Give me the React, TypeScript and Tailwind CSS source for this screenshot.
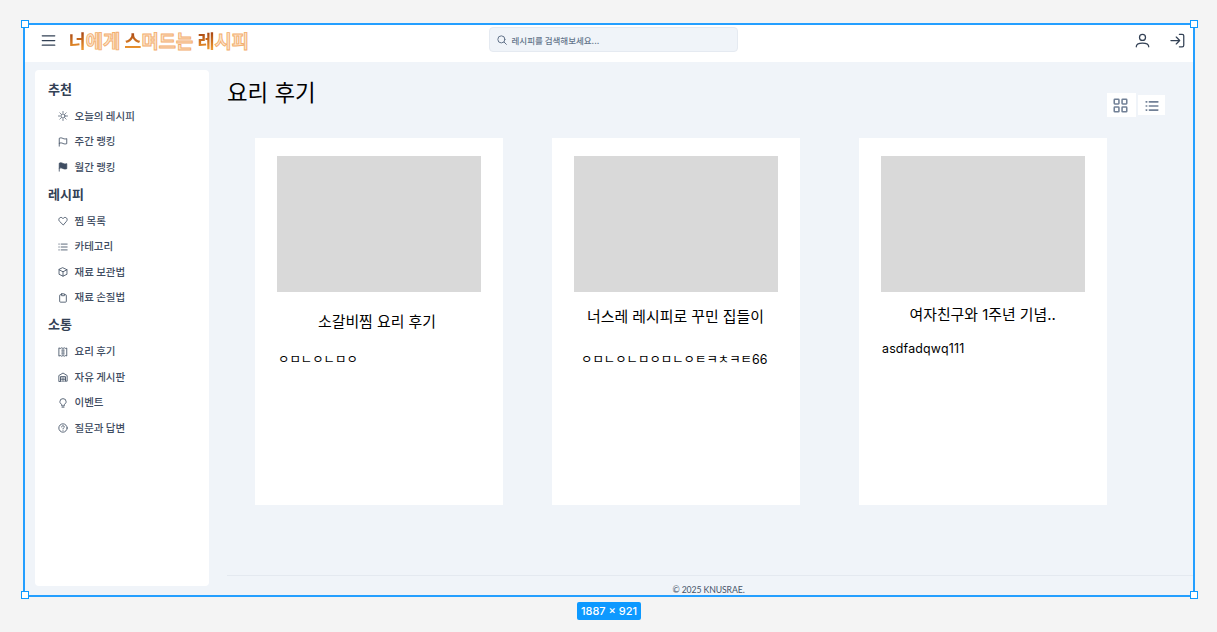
import type { ReactNode } from "react";

const KR = "font-['Inter','Noto_Sans_CJK_KR',sans-serif]";

function Icon({ children, className, w = 1.6 }: { children: ReactNode; className: string; w?: number }) {
  return (
    <svg viewBox="0 0 24 24" fill="none" stroke="currentColor" strokeWidth={w} strokeLinecap="round" strokeLinejoin="round" className={className}>
      {children}
    </svg>
  );
}

const listShape = <path d="M7.5 5H22M7.5 12H22M7.5 19H22M2 5h1M2 12h1M2 19h1" />;

const icons: Record<string, ReactNode> = {
  sun: (
    <>
      <circle cx="12" cy="12" r="5" />
      <path d="M12 1.5v2M12 20.5v2M1.5 12h2M20.5 12h2M4.6 4.6l1.3 1.3M18.1 18.1l1.3 1.3M4.6 19.4l1.3-1.3M18.1 5.9l1.3-1.3" />
    </>
  ),
  flag: <path d="M3 22V3c3-1.500 6-1 9 .5s6 1.500 9 .5v12c-3 1-6 1-9-.5s-6-2-9-.5" />,
  flagFill: <path fill="currentColor" d="M3 22V3c3-1.500 6-1 9 .5s6 1.500 9 .5v12c-3 1-6 1-9-.5s-6-2-9-.5" />,
  heart: <path d="M12 21 3.400 12.500C1.500 10.500 1.500 7 3.400 5c2.200-2.200 5.500-2.100 7.500 0L12 6.200 13.100 5c2-2.100 5.300-2.200 7.500 0 1.900 2 1.900 5.500 0 7.500z" />,
  list: listShape,
  box: <path d="M12 2 21.500 6.500v11L12 22l-9.500-4.500v-11zM2.500 6.500 12 11.500l9.500-5M12 11.500V22" />,
  clipboard: (
    <>
      <path d="M8 4H6a2 2 0 0 0-2 2v14a2 2 0 0 0 2 2h12a2 2 0 0 0 2-2V6a2 2 0 0 0-2-2h-2" />
      <rect x="8" y="2" width="8" height="4.500" rx="1" />
    </>
  ),
  receipt: (
    <>
      <path d="M3 2.500 5.500 3.500 8.800 2 12 3.500 15.200 2l3.300 1.500L21 2.500v19l-2.500-1-3.300 1.500L12 20.500 8.800 22l-3.300-1.500L3 21.500z" />
      <path strokeWidth="1.5" d="M8.500 7.500h7M8.500 12h7M8.500 16.500h7M12 6v12" />
    </>
  ),
  warehouse: (
    <>
      <path d="M2 22V8.500L12 2.500l10 6V22h-4V11H6v11z" />
      <path strokeWidth="1.5" d="M6 14.500h12M6 18h12M6 22h12M12 14.500V22" />
    </>
  ),
  bulb: <path d="M9 18v-2.500C6.500 14 4.500 12 4.500 9a7.500 7.500 0 0 1 15 0c0 3-2 5-4.500 6.500V18zM9.500 22h5" />,
  question: (
    <>
      <circle cx="12" cy="12" r="10" />
      <path d="M8.800 9.500c0-2 1.500-3 3.200-3s3.200 1.100 3.200 2.900c0 2.300-3.200 2.300-3.200 4.600M12 17.400v.2" />
    </>
  ),
};

const sections = [
  { title: "추천", items: [["sun", "오늘의 레시피"], ["flag", "주간 랭킹"], ["flagFill", "월간 랭킹"]] },
  { title: "레시피", items: [["heart", "찜 목록"], ["list", "카테고리"], ["box", "재료 보관법"], ["clipboard", "재료 손질법"]] },
  { title: "소통", items: [["receipt", "요리 후기"], ["warehouse", "자유 게시판"], ["bulb", "이벤트"], ["question", "질문과 답변"]] },
];

function Solid({ children }: { children: string }) {
  return <span className="bg-linear-to-b from-[#a94713] from-25% to-[#ee982f] to-85% bg-clip-text text-transparent">{children}</span>;
}

function Outlined({ children }: { children: string }) {
  return <span className="text-[#fbe3cb] [-webkit-text-stroke:0.9px_#f3ae6c]">{children}</span>;
}

function Header() {
  return (
    <header className="flex h-[37px] shrink-0 items-center bg-white pl-[15.500px] pr-[8px] text-[#334155]">
      <Icon className="mt-[-6px] size-[15px]" w={2}>
        <path d="M2 4.500h20M2 12h20M2 19.500h20" />
      </Icon>
      <h1 className="ml-[13px] mt-[-8px] w-[420px] whitespace-nowrap font-['Noto_Sans_CJK_KR',sans-serif] text-[18.700px] font-bold leading-[26px]">
        <Solid>너</Solid><Outlined>에게</Outlined> <Solid>스</Solid><Outlined>며드는</Outlined> <Solid>레</Solid><Outlined>시피</Outlined>
      </h1>
      <div className="mt-[-8px] flex h-[25px] w-[249px] items-center rounded-[4px] border border-[#e5eaf1] bg-[#f0f4f9] pl-[7px] text-[#64748b]">
        <Icon className="size-[10px]" w={2.400}>
          <circle cx="10.500" cy="10.500" r="8.500" />
          <path d="m17 17 5.500 5.500" />
        </Icon>
        <span className="ml-[5px] font-['Noto_Sans_CJK_KR',sans-serif] text-[8.500px] font-medium leading-3">레시피를 검색해보세요...</span>
      </div>
      <div className="ml-auto mt-[-6px] flex gap-[20px]">
        <Icon className="size-[15px]" w={2}>
          <circle cx="12" cy="7" r="4.800" />
          <path d="M2 22c0-4 3.500-6 10-6s10 2 10 6" />
        </Icon>
        <Icon className="size-[15px]" w={2}>
          <path d="M1.500 12H15M10 6.500l5.500 5.500-5.500 5.500M15 2h4.500a2.500 2.500 0 0 1 2.500 2.500v15a2.500 2.500 0 0 1-2.500 2.500H15" />
        </Icon>
      </div>
    </header>
  );
}

function Sidebar() {
  return (
    <nav className="h-[516px] w-[174px] shrink-0 rounded-[4px] bg-white pt-[5px] font-['Noto_Sans_CJK_KR',sans-serif] text-[#334155]">
      {sections.map((s) => (
        <section key={s.title}>
          <h2 className="flex h-[28.200px] items-center pb-[1.500px] pl-[13px] text-[13px] font-bold leading-none">{s.title}</h2>
          {s.items.map(([icon, label]) => (
            <div key={label} className="flex h-[25.600px] items-center pl-[22.500px] text-[10.500px] font-medium leading-none text-[#3f4d62]">
              <Icon className="mr-[7px] size-[10px]" w={2}>{icons[icon]}</Icon>
              {label}
            </div>
          ))}
        </section>
      ))}
    </nav>
  );
}

function Card({ title, body, className, titleClass, bodyClass }: { title: string; body: string; className: string; titleClass: string; bodyClass: string }) {
  return (
    <article className={`${className} h-[367px] w-[248px] shrink-0 bg-white pt-[18px] text-black`}>
      <div className="ml-[22px] h-[136px] w-[204px] bg-[#d9d9d9]" />
      <h3 className={`${titleClass} whitespace-nowrap text-[14.900px] leading-5`}>{title}</h3>
      <p className={`${bodyClass} whitespace-nowrap text-[12.400px] leading-4`}>{body}</p>
    </article>
  );
}

function Handle({ className }: { className: string }) {
  return <i className={`absolute size-[8px] border border-[#0d99ff] bg-white ${className}`} />;
}

export default function App() {
  return (
    <div className="h-[632px] w-[1217px] overflow-hidden bg-[#f4f4f4] pl-[25px] pt-[25px]">
      <div className="relative flex h-[570px] w-[1168px] flex-col bg-[#f0f4f9] outline-2 outline-[#249fff]">
        <Header />
        <div className="flex pl-[10px] pt-[8px]">
          <Sidebar />
          <main className={`flex h-[524px] min-w-0 flex-1 flex-col pl-[18px] ${KR}`}>
            <div className="flex h-[68px] items-start">
              <h2 className="mt-[7px] text-[22.400px] leading-8 text-black">요리 후기</h2>
              <div className="ml-auto mr-[28px] mt-[23px] flex items-center gap-[2px] text-[#718096]">
                <span className="flex h-[24px] w-[29px] items-center justify-center bg-white pr-[2px]">
                  <Icon className="size-[15px]" w={2.500}>
                    <rect x="2" y="2" width="7.500" height="7.500" rx="1" />
                    <rect x="14.500" y="2" width="7.500" height="7.500" rx="1" />
                    <rect x="2" y="14.500" width="7.500" height="7.500" rx="1" />
                    <rect x="14.500" y="14.500" width="7.500" height="7.500" rx="1" />
                  </Icon>
                </span>
                <span className="flex h-[20px] w-[27px] items-center justify-center bg-white pt-px">
                  <Icon className="size-[14px]" w={2.800}>{listShape}</Icon>
                </span>
              </div>
            </div>
            <div className="flex pl-[28px]">
              <Card title="소갈비찜 요리 후기" body="ㅇㅁㄴㅇㄴㅁㅇ" className="mr-[49px]" titleClass="ml-[63px] mt-[20px]" bodyClass="ml-[23px] mt-[20px]" />
              <Card title="너스레 레시피로 꾸민 집들이" body="ㅇㅁㄴㅇㄴㅁㅇㅁㄴㅇㅌㅋㅊㅋㅌ66" className="mr-[59px]" titleClass="ml-[35px] mt-[15px]" bodyClass="ml-[29px] mt-[25px]" />
              <Card title="여자친구와 1주년 기념.." body="asdfadqwq111" className="" titleClass="ml-[50.500px] mt-[13px]" bodyClass="ml-[23px] mt-[16px] tracking-[0.18px]" />
            </div>
            <footer className="mt-auto h-[19px] border-t border-[#e4e9f0] pr-[3px] pt-[8px] text-center font-['Lato',sans-serif] text-[8.700px] leading-3 tracking-[-0.1px] text-[#475569]">
              © 2025 KNUSRAE.
            </footer>
          </main>
        </div>
        <Handle className="-left-[4px] -top-[5px]" />
        <Handle className="-right-[5px] -top-[5px]" />
        <Handle className="-bottom-[4px] -left-[4px]" />
        <Handle className="-bottom-[4px] -right-[5px]" />
      </div>
      <div className="ml-[552px] mt-[7px] flex h-[18px] w-[64px] items-center justify-center rounded-[2px] bg-[#0d99ff] font-['Inter',sans-serif] text-[11px] font-medium text-white">
        1887 × 921
      </div>
    </div>
  );
}
